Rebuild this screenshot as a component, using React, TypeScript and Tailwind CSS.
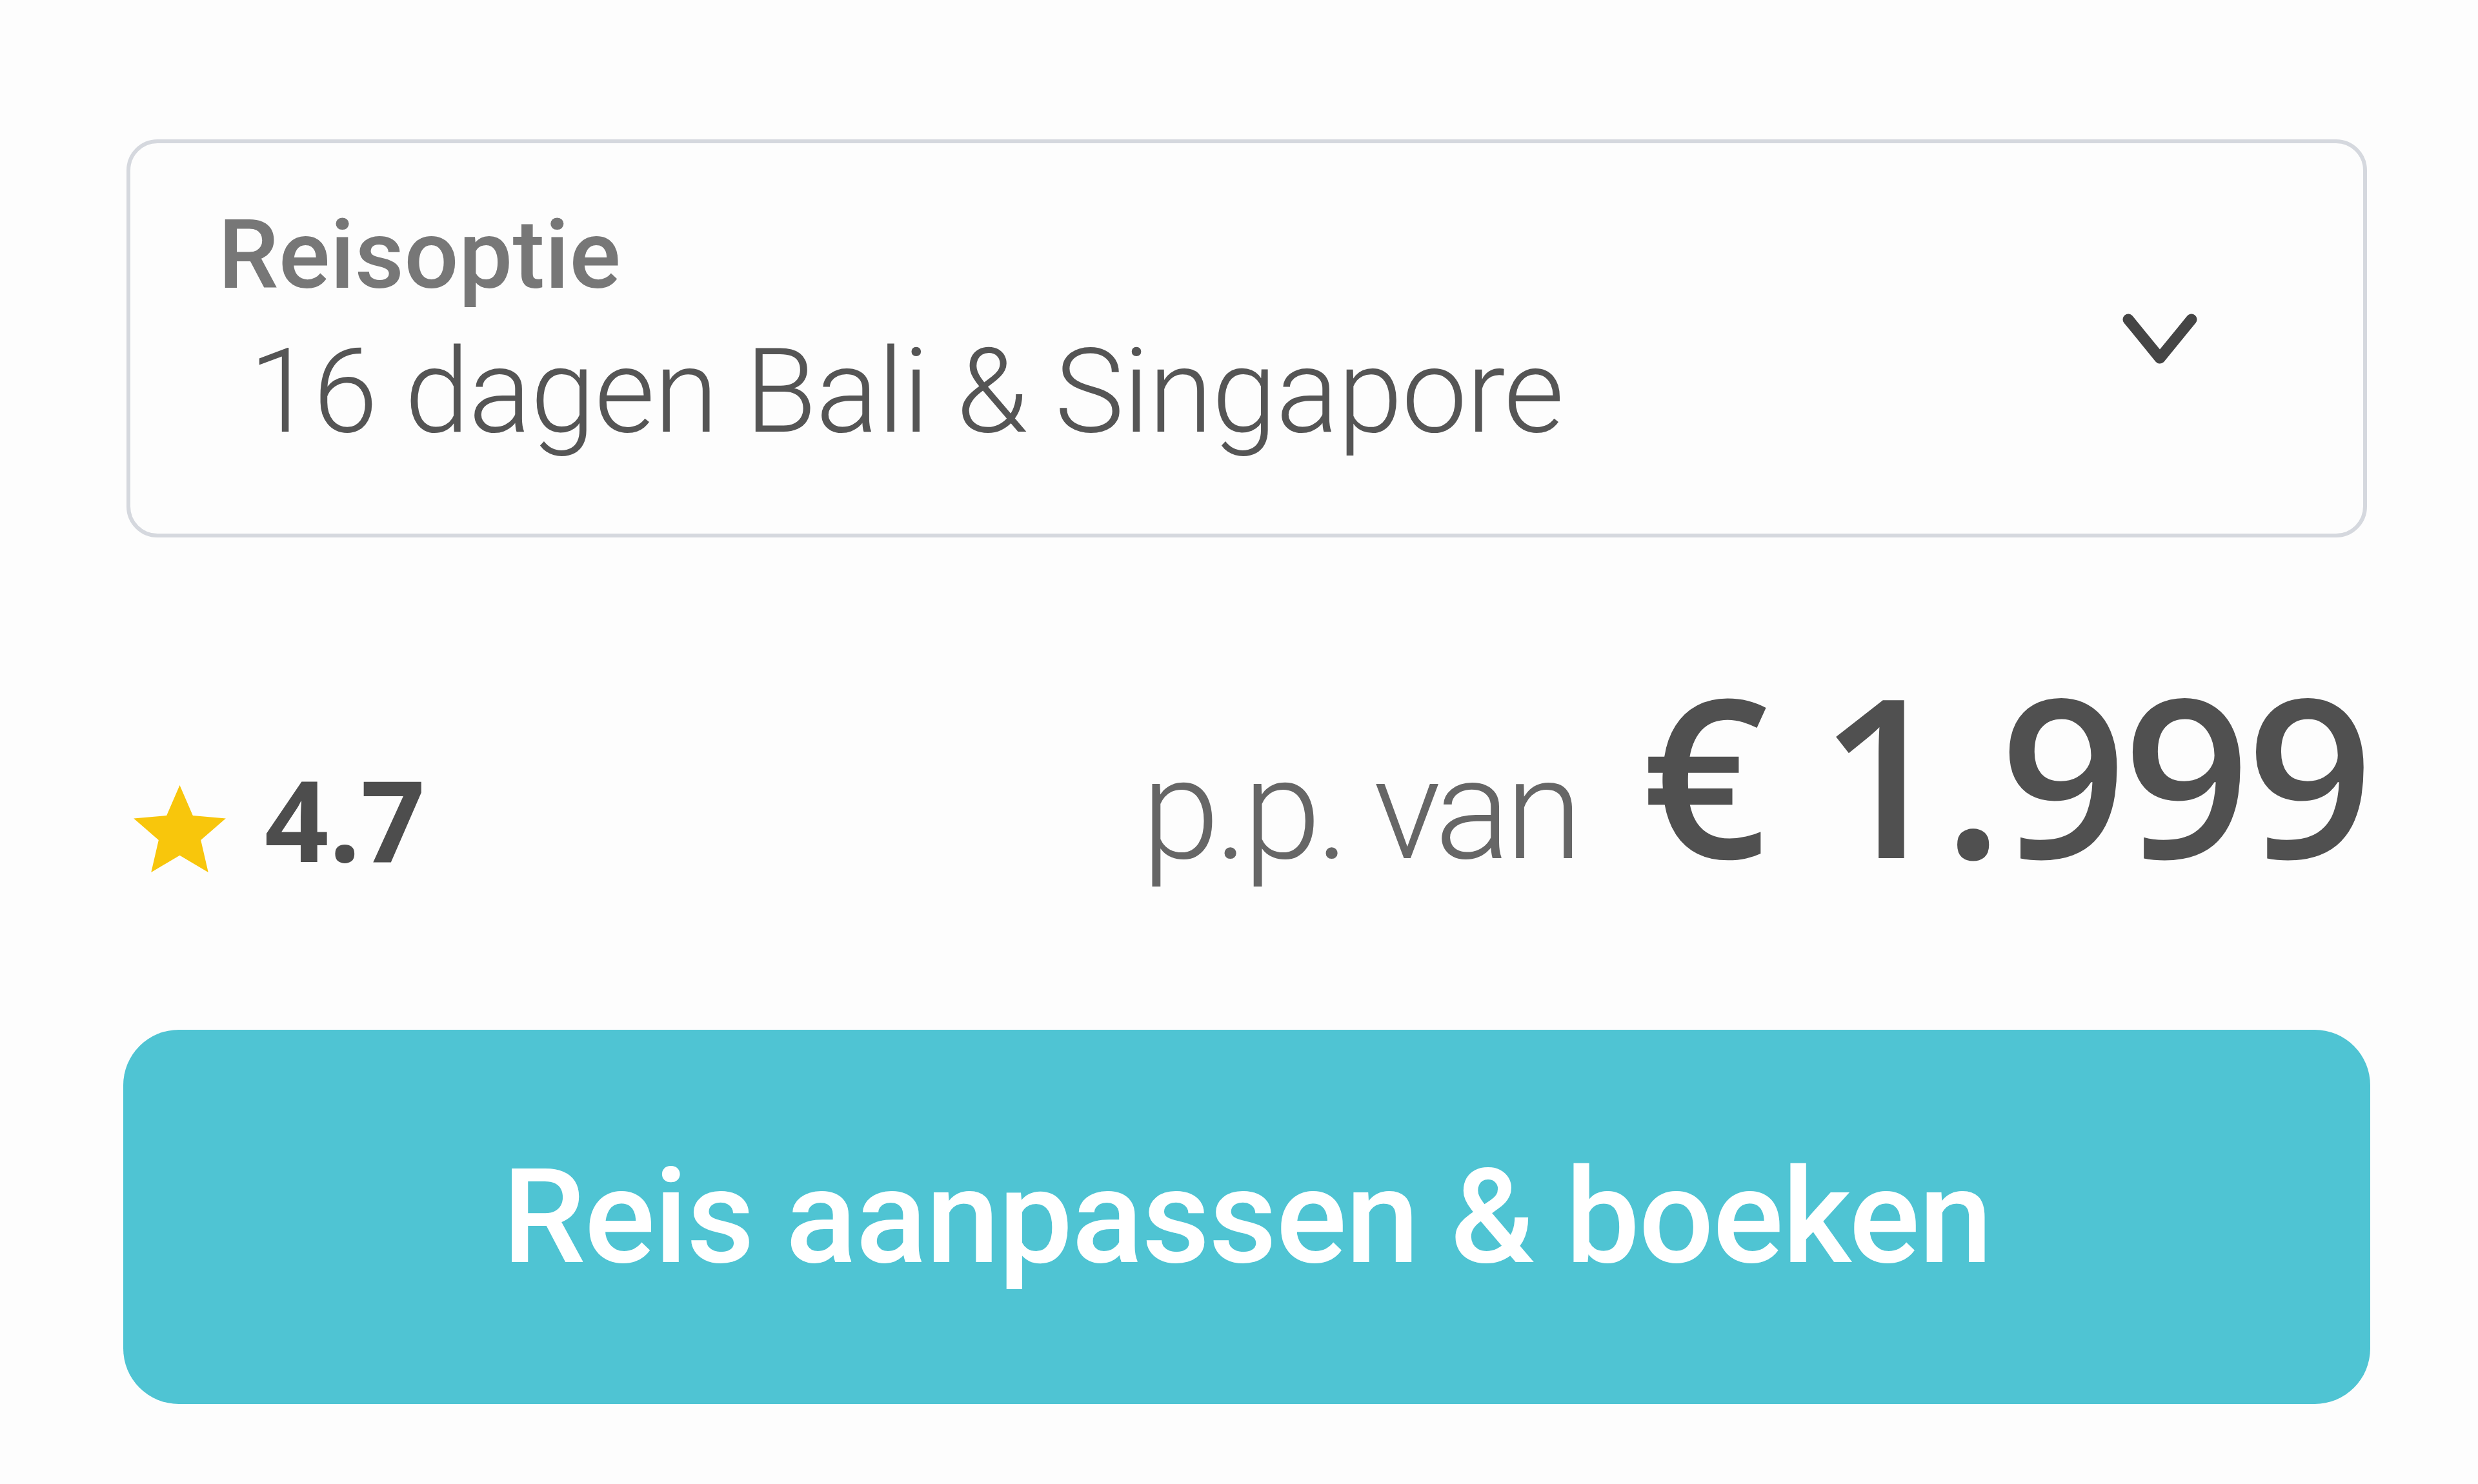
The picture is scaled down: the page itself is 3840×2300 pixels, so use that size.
import React from "react";

const Star = () => (
  <svg viewBox="2.35 2.2 19.3 18.25" className="w-[143px] h-[135px] shrink-0 mt-[30px]">
    <path
      fill="#f8c60c"
      d="M12 2.2l2.75 6.35 6.9.6-5.23 4.55 1.56 6.75L12 16.9l-5.98 3.55 1.56-6.75L2.35 9.15l6.9-.6z"
    />
  </svg>
);

const Chevron = () => (
  <svg viewBox="0 0 130 90" className="w-[130px] h-[90px] shrink-0">
    <polyline
      points="16,14 65,74 114,14"
      fill="none"
      stroke="#454545"
      strokeWidth="17"
      strokeLinecap="round"
      strokeLinejoin="round"
    />
  </svg>
);

export default function App() {
  return (
    <div className="w-[3840px] h-[2300px] bg-[#fdfdfd] pt-[216px] pl-[191px]">
      <div className="w-[3482px] flex flex-col">
        {/* Trip option select */}
        <div className="mx-[5px] h-[617px] rounded-[48px] border-[6px] border-[#d5d8de] bg-[#fdfdfd] flex items-start justify-between pl-[136px] pr-[250px] pt-[99px]">
          <div className="flex flex-col" style={{ fontFamily: "Roboto, sans-serif" }}>
            <span className="text-[149px] leading-none font-medium text-[#777777]">
              Reisoptie
            </span>
            <span className="mt-[47px] ml-[48px] text-[181px] leading-none font-light tracking-[-1.3px] text-[#555555]">
              16 dagen Bali &amp; Singapore
            </span>
          </div>
          <div className="mt-[160px]">
            <Chevron />
          </div>
        </div>

        {/* Rating + price */}
        <div className="mt-[192px] flex items-end justify-between">
          <div className="flex items-center gap-[60px] ml-[16px] mb-[12px]">
            <Star />
            <span
              className="text-[174px] leading-none font-bold text-[#4d4d4d]"
              style={{ fontFamily: "'Open Sans', sans-serif" }}
            >
              4.7
            </span>
          </div>
          <div className="flex items-baseline">
            <span
              className="text-[218px] leading-none font-light tracking-[-8px] text-[#666666]"
              style={{ fontFamily: "Roboto, sans-serif" }}
            >
              p.p. van
            </span>
            <span
              className="ml-[100px] text-[343px] leading-none font-semibold tracking-[-5px] text-[#505050]"
              style={{ fontFamily: "'Open Sans', sans-serif" }}
            >
              € 1.999
            </span>
          </div>
        </div>

        {/* Book button */}
        <button
          className="mt-[228px] h-[580px] rounded-[86px] bg-[#4fc4d3] flex items-center justify-center text-white text-[205px] font-medium leading-none tracking-[-1.7px]"
          style={{ fontFamily: "Roboto, sans-serif" }}
        >
          Reis aanpassen &amp; boeken
        </button>
      </div>
    </div>
  );
}
